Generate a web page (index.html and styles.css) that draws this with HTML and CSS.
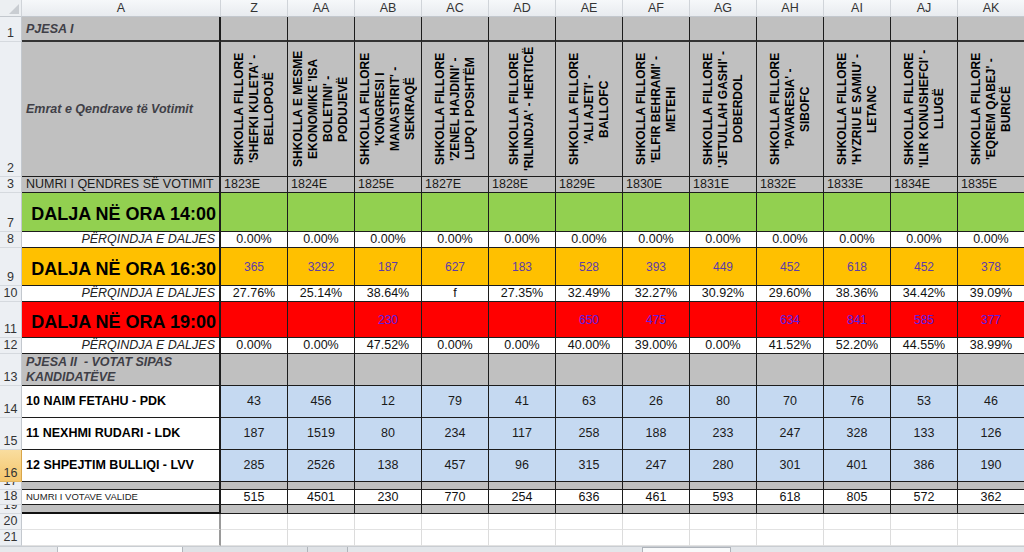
FILE: index.html
```html
<!DOCTYPE html>
<html lang="sq">
<head>
<meta charset="utf-8">
<title>PJESA I</title>
<link rel="stylesheet" href="styles.css">
</head>
<body>
<div class="sheet">
  <div class="row hdr">
    <div class="c corner"><svg class="tri" width="10" height="10" viewBox="0 0 10 10"><polygon points="10,0 10,10 0,10" fill="#c9cdd2"/></svg></div>
    <div class="c">A</div><div class="c">Z</div><div class="c">AA</div><div class="c">AB</div><div class="c">AC</div><div class="c">AD</div><div class="c">AE</div><div class="c">AF</div><div class="c">AG</div><div class="c">AH</div><div class="c">AI</div><div class="c">AJ</div><div class="c">AK</div>
  </div>

  <div class="row r1">
    <div class="rh">1</div>
    <div class="c a">PJESA I</div>
    <div class="c"></div><div class="c"></div><div class="c"></div><div class="c"></div><div class="c"></div><div class="c"></div><div class="c"></div><div class="c"></div><div class="c"></div><div class="c"></div><div class="c"></div><div class="c"></div>
  </div>

  <div class="row r2">
    <div class="rh">2</div>
    <div class="c a">Emrat e Qendrave të Votimit</div>
    <div class="c"><div class="vt">SHKOLLA FILLORE<br>'SHEFKI KULETA' -<br>BELLOPOJË</div></div>
    <div class="c"><div class="vt">SHKOLLA E MESME<br>EKONOMIKE 'ISA<br>BOLETINI' -<br>PODUJEVË</div></div>
    <div class="c"><div class="vt">SHKOLLA FILLORE<br>'KONGRESI I<br>MANASTIRIT' -<br>SEKIRAQË</div></div>
    <div class="c"><div class="vt">SHKOLLA FILLORE<br>'ZENEL HAJDINI' -<br>LUPQ I POSHTËM</div></div>
    <div class="c"><div class="vt">SHKOLLA FILLORE<br>'RILINDJA' - HERTICË</div></div>
    <div class="c"><div class="vt">SHKOLLA FILLORE<br>'ALI AJETI' -<br>BALLOFC</div></div>
    <div class="c"><div class="vt">SHKOLLA FILLORE<br>'ELFIR BEHRAMI' -<br>METEHI</div></div>
    <div class="c"><div class="vt">SHKOLLA FILLORE<br>'JETULLAH GASHI' -<br>DOBERDOL</div></div>
    <div class="c"><div class="vt">SHKOLLA FILLORE<br>'PAVARESIA' -<br>SIBOFC</div></div>
    <div class="c"><div class="vt">SHKOLLA FILLORE<br>'HYZRIU E SAMIU' -<br>LETANC</div></div>
    <div class="c"><div class="vt">SHKOLLA FILLORE<br>'ILIR KONUSHEFCI' -<br>LLUGË</div></div>
    <div class="c"><div class="vt">SHKOLLA FILLORE<br>'EQREM QABEJ' -<br>BURICË</div></div>
  </div>

  <div class="row r3">
    <div class="rh">3</div>
    <div class="c a">NUMRI I QENDRES SË VOTIMIT</div>
    <div class="c">1823E</div><div class="c">1824E</div><div class="c">1825E</div><div class="c">1827E</div><div class="c">1828E</div><div class="c">1829E</div><div class="c">1830E</div><div class="c">1831E</div><div class="c">1832E</div><div class="c">1833E</div><div class="c">1834E</div><div class="c">1835E</div>
  </div>

  <div class="row r7 big">
    <div class="rh">7</div>
    <div class="c a">DALJA NË ORA 14:00</div>
    <div class="c"></div><div class="c"></div><div class="c"></div><div class="c"></div><div class="c"></div><div class="c"></div><div class="c"></div><div class="c"></div><div class="c"></div><div class="c"></div><div class="c"></div><div class="c"></div>
  </div>

  <div class="row pct">
    <div class="rh">8</div>
    <div class="c a">PËRQINDJA E DALJES</div>
    <div class="c">0.00%</div><div class="c">0.00%</div><div class="c">0.00%</div><div class="c">0.00%</div><div class="c">0.00%</div><div class="c">0.00%</div><div class="c">0.00%</div><div class="c">0.00%</div><div class="c">0.00%</div><div class="c">0.00%</div><div class="c">0.00%</div><div class="c">0.00%</div>
  </div>

  <div class="row r9 big">
    <div class="rh">9</div>
    <div class="c a">DALJA NË ORA 16:30</div>
    <div class="c">365</div><div class="c">3292</div><div class="c">187</div><div class="c">627</div><div class="c">183</div><div class="c">528</div><div class="c">393</div><div class="c">449</div><div class="c">452</div><div class="c">618</div><div class="c">452</div><div class="c">378</div>
  </div>

  <div class="row pct">
    <div class="rh">10</div>
    <div class="c a">PËRQINDJA E DALJES</div>
    <div class="c">27.76%</div><div class="c">25.14%</div><div class="c">38.64%</div><div class="c">f</div><div class="c">27.35%</div><div class="c">32.49%</div><div class="c">32.27%</div><div class="c">30.92%</div><div class="c">29.60%</div><div class="c">38.36%</div><div class="c">34.42%</div><div class="c">39.09%</div>
  </div>

  <div class="row r11 big">
    <div class="rh">11</div>
    <div class="c a">DALJA NË ORA 19:00</div>
    <div class="c"></div><div class="c"></div><div class="c">230</div><div class="c"></div><div class="c"></div><div class="c">650</div><div class="c">475</div><div class="c"></div><div class="c">634</div><div class="c">841</div><div class="c">585</div><div class="c">377</div>
  </div>

  <div class="row pct">
    <div class="rh">12</div>
    <div class="c a">PËRQINDJA E DALJES</div>
    <div class="c">0.00%</div><div class="c">0.00%</div><div class="c">47.52%</div><div class="c">0.00%</div><div class="c">0.00%</div><div class="c">40.00%</div><div class="c">39.00%</div><div class="c">0.00%</div><div class="c">41.52%</div><div class="c">52.20%</div><div class="c">44.55%</div><div class="c">38.99%</div>
  </div>

  <div class="row r13">
    <div class="rh">13</div>
    <div class="c a">PJESA II &nbsp;- VOTAT SIPAS<br>KANDIDATËVE</div>
    <div class="c"></div><div class="c"></div><div class="c"></div><div class="c"></div><div class="c"></div><div class="c"></div><div class="c"></div><div class="c"></div><div class="c"></div><div class="c"></div><div class="c"></div><div class="c"></div>
  </div>

  <div class="row cand">
    <div class="rh">14</div>
    <div class="c a">10 NAIM FETAHU - PDK</div>
    <div class="c">43</div><div class="c">456</div><div class="c">12</div><div class="c">79</div><div class="c">41</div><div class="c">63</div><div class="c">26</div><div class="c">80</div><div class="c">70</div><div class="c">76</div><div class="c">53</div><div class="c">46</div>
  </div>

  <div class="row cand">
    <div class="rh">15</div>
    <div class="c a">11 NEXHMI RUDARI - LDK</div>
    <div class="c">187</div><div class="c">1519</div><div class="c">80</div><div class="c">234</div><div class="c">117</div><div class="c">258</div><div class="c">188</div><div class="c">233</div><div class="c">247</div><div class="c">328</div><div class="c">133</div><div class="c">126</div>
  </div>

  <div class="row cand">
    <div class="rh sel">16</div>
    <div class="c a">12 SHPEJTIM BULLIQI - LVV</div>
    <div class="c">285</div><div class="c">2526</div><div class="c">138</div><div class="c">457</div><div class="c">96</div><div class="c">315</div><div class="c">247</div><div class="c">280</div><div class="c">301</div><div class="c">401</div><div class="c">386</div><div class="c">190</div>
  </div>

  <div class="row gap">
    <div class="rh">17</div>
    <div class="c a"></div>
    <div class="c"></div><div class="c"></div><div class="c"></div><div class="c"></div><div class="c"></div><div class="c"></div><div class="c"></div><div class="c"></div><div class="c"></div><div class="c"></div><div class="c"></div><div class="c"></div>
  </div>

  <div class="row r18">
    <div class="rh">18</div>
    <div class="c a">NUMRI I VOTAVE VALIDE</div>
    <div class="c">515</div><div class="c">4501</div><div class="c">230</div><div class="c">770</div><div class="c">254</div><div class="c">636</div><div class="c">461</div><div class="c">593</div><div class="c">618</div><div class="c">805</div><div class="c">572</div><div class="c">362</div>
  </div>

  <div class="row gap r19">
    <div class="rh">19</div>
    <div class="c a"></div>
    <div class="c"></div><div class="c"></div><div class="c"></div><div class="c"></div><div class="c"></div><div class="c"></div><div class="c"></div><div class="c"></div><div class="c"></div><div class="c"></div><div class="c"></div><div class="c"></div>
  </div>

  <div class="row empty">
    <div class="rh">20</div>
    <div class="c a"></div>
    <div class="c"></div><div class="c"></div><div class="c"></div><div class="c"></div><div class="c"></div><div class="c"></div><div class="c"></div><div class="c"></div><div class="c"></div><div class="c"></div><div class="c"></div><div class="c"></div>
  </div>

  <div class="row empty">
    <div class="rh">21</div>
    <div class="c a"></div>
    <div class="c"></div><div class="c"></div><div class="c"></div><div class="c"></div><div class="c"></div><div class="c"></div><div class="c"></div><div class="c"></div><div class="c"></div><div class="c"></div><div class="c"></div><div class="c"></div>
  </div>
</div>
<div class="tabs">
  <div class="nav"></div>
  <div class="tab active"></div>
  <div class="tab"></div>
  <div class="tab small"></div>
  <div class="fill"></div>
  <div class="thumb"></div>
  <div class="fill"></div>
</div>
</body>
</html>
```

FILE: styles.css
```css
* { box-sizing: border-box; }
html, body { margin: 0; padding: 0; }
body {
  width: 1024px;
  height: 552px;
  overflow: hidden;
  background: #fff;
  color: #000;
  font-family: "Liberation Sans", Arial, sans-serif;
  font-size: 12px;
}

.sheet {
  display: grid;
  grid-template-columns: 22px 199px repeat(12, 67px);
  grid-template-rows: 17px 25px 135px 16px 39px 16px 38px 16px 36px 16px 32px 32px 32px 32px 8px 15px 9px 16px 16px;
  width: 1025px;
}
.row { display: contents; }

.c {
  display: flex;
  align-items: center;
  justify-content: center;
  overflow: hidden;
  white-space: nowrap;
  padding: 0 3px;
  line-height: 1;
  border-right: 1px solid #1c1c1c;
  border-bottom: 1px solid #1c1c1c;
}
.c.a {
  justify-content: flex-start;
  padding-left: 4px;
  border-right: 2px solid #1c1c1c;
}

/* column header */
.hdr .c {
  background: linear-gradient(#f6f8fa, #e8ebef);
  border-right: 1px solid #d0d4d9;
  border-bottom: 1px solid #c3c8ce;
  color: #333;
  font-size: 12.5px;
  padding-top: 1px;
}
.hdr .c.a { justify-content: center; padding-left: 0; border-right: 1px solid #d0d4d9; }
.hdr .corner { position: relative; background: #eceff2; }
.tri { position: absolute; right: 2px; bottom: 2px; }

/* row header */
.rh {
  display: flex;
  align-items: flex-end;
  justify-content: center;
  overflow: hidden;
  background: #eceff3;
  border-right: 1px solid #c3c8ce;
  border-bottom: 1px solid #d5d9de;
  color: #333;
  font-size: 12.5px;
  line-height: 15px;
  padding-bottom: 0;
}
.rh.sel {
  background: linear-gradient(#f9dd9f, #f4c66c);
  border-right: 1px solid #d9a64a;
  border-bottom: 1px solid #e0b560;
}

/* row 1 */
.r1 .c {
  background: #c0c0c0;
  border-bottom: 2px solid #333;
}
.r1 .c.a,
.r2 .c.a,
.r13 .c.a {
  color: #3f3f47;
  font-weight: bold;
  font-style: italic;
  font-size: 12.5px;
}
.r1 .c.a { padding-top: 2px; }

/* row 2 */
.r2 .c { background: #c0c0c0; }
.vt {
  writing-mode: vertical-rl;
  transform: rotate(180deg);
  height: 124px;
  text-align: center;
  font-weight: bold;
  font-size: 12px;
  line-height: 15px;
  white-space: nowrap;
  color: #000;
}

/* row 3 */
.r3 .c {
  background: #c0c0c0;
  justify-content: flex-start;
  color: #1a1a1a;
  font-size: 12.5px;
}

/* big colour rows */
.big .c.a {
  justify-content: flex-end;
  padding-right: 3px;
  font-size: 18px;
  font-weight: bold;
  padding-top: 4px;
}
.r7 .c { background: #92d050; }
.r9 .c { background: #ffc000; color: #5d3ca8; }
.r11 .c { background: #ff0000; color: #5a1ee6; }
.big .c.a { color: #000; }

/* percentage rows */
.pct .c { background: #fff; color: #111; font-size: 12.5px; }
.pct .c.a {
  justify-content: flex-end;
  font-style: italic;
  padding-right: 4px;
  color: #222;
}

/* row 13 */
.r13 .c { background: #c0c0c0; }
.r13 .c.a {
  white-space: normal;
  line-height: 15px;
}

/* candidates */
.cand .c { background: #c5d9f1; color: #1a1a1a; font-size: 12.5px; }
.cand .c.a {
  background: #fff;
  color: #000;
  font-weight: bold;
  font-size: 12.5px;
}

/* thin gray rows */
.gap .c { background: #c0c0c0; }
.r19 .c.a { border-bottom: 2px solid #111; }

/* valid votes */
.r18 .c { background: #fff; font-size: 12.5px; color: #111; }
.r18 .c.a {
  font-size: 9.5px;
  color: #222;
}

/* empty rows */
.empty .c {
  background: #fff;
  border-right: 1px solid #dcdcdc;
  border-bottom: 1px solid #e2e2e2;
}
.empty .c.a { border-right: 2px solid #9a9a9a; }

/* sheet tabs strip */
.tabs {
  display: flex;
  height: 6px;
  background: #e3e6ea;
  border-top: 1px solid #c9cdd2;
}
.nav { width: 58px; background: #e7e9ec; border-right: 1px solid #b8bcc2; }
.tab { width: 125px; background: #dfe2e6; border-right: 1px solid #b0b4ba; }
.tab.active { background: #fbfcfd; }
.tab.small { width: 40px; }
.fill { flex: 1; }
.thumb { width: 89px; background: #f8f9fa; border: 1px solid #aeb3ba; border-bottom: none; }
```
